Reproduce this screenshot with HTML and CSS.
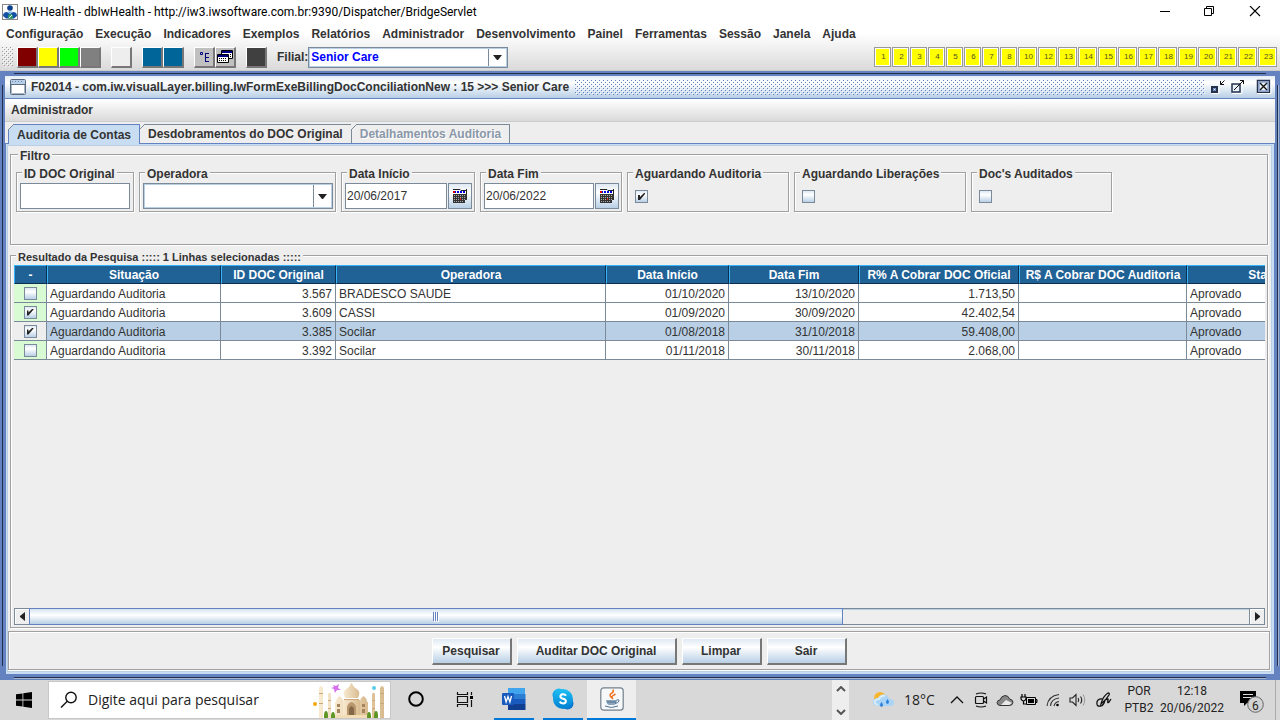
FILE: index.html
```html
<!DOCTYPE html>
<html lang="pt-BR">
<head>
<meta charset="utf-8">
<title>IW-Health</title>
<link rel="stylesheet" href="styles.css">
</head>
<body>
<header class="titlebar">
  <svg class="app-icon" width="16" height="16" viewBox="0 0 16 16"><rect x=".5" y=".5" width="15" height="15" fill="#fff" stroke="#888"/><circle cx="8" cy="4" r="2.800" fill="#0c3f8c"/><path d="M1 12q0-4 4-4l3 2 3-2q4 0 4 4l-3 2.500H4z" fill="#1552a5"/><path d="M5.500 7.500h5L8 10.500z" fill="#69aee8"/><circle cx="8.500" cy="12.500" r="2.500" fill="#2c9a62"/><path d="M7 14l3-3" stroke="#fff"/></svg>
  <span class="app-title">IW-Health - dbIwHealth - http://iw3.iwsoftware.com.br:9390/Dispatcher/BridgeServlet</span>
  <div class="win-buttons">
    <button aria-label="Minimizar"><svg width="12" height="12" viewBox="0 0 12 12"><path d="M1 5.500h10" stroke="#000"/></svg></button>
    <button aria-label="Restaurar"><svg width="12" height="12" viewBox="0 0 12 12"><path d="M.5 2.500h7v7h-7zM2.500 2.500V.5h7v7h-2" fill="none" stroke="#000"/></svg></button>
    <button aria-label="Fechar"><svg width="12" height="12" viewBox="0 0 12 12"><path d="M1 0l10 10M11 0L1 10" stroke="#000" stroke-width="1.100"/></svg></button>
  </div>
</header>
<div class="chrome">
  <nav class="menubar">
    <button>Configuração</button><button>Execução</button><button>Indicadores</button><button>Exemplos</button><button>Relatórios</button><button>Administrador</button><button>Desenvolvimento</button><button>Painel</button><button>Ferramentas</button><button>Sessão</button><button>Janela</button><button>Ajuda</button>
  </nav>
  <div class="toolbar">
    <svg class="grip" width="11" height="20"><defs><pattern id="gp" width="4" height="4" patternUnits="userSpaceOnUse"><path d="M0 0h1v1H0zM2 2h1v1H2z" fill="#999"/><path d="M1 1h1v1H1zM3 3h1v1H3z" fill="#fff"/></pattern></defs><rect width="11" height="20" fill="url(#gp)"/></svg>
    <div class="tool-group"><button class="tool maroon" aria-label="Vinho"></button><button class="tool yellow" aria-label="Amarelo"></button><button class="tool green" aria-label="Verde"></button><button class="tool gray" aria-label="Cinza"></button></div>
    <div class="tool-group"><button class="tool plain" aria-label="Claro"></button></div>
    <div class="tool-group"><button class="tool blue" aria-label="Azul 1"></button><button class="tool blue" aria-label="Azul 2"></button></div>
    <div class="tool-group">
      <button class="tool silver" aria-label="Árvore"><svg width="16" height="16" viewBox="0 0 16 16"><path d="M4.500 3.500h2v2h-2zM9.500 4v9M9 4.500h4M9 8.500h4M9 12.500h4" fill="none" stroke="#000080"/></svg></button>
      <button class="tool silver" aria-label="Janelas"><svg width="16" height="15" viewBox="0 0 16 15"><path d="M4.500 1.500h11v8h-11z" fill="#fff" stroke="#000"/><path d="M5 2h10v2H5z" fill="#000080"/><path d="M.5 5.500h11v8H.5z" fill="#fff" stroke="#000"/><path d="M1 6h10v2H1z" fill="#000080"/><path d="M2 9.500h8M2 11.500h8M13 5.500h2M13 7.500h2" stroke="#000" stroke-dasharray="1 1"/></svg></button>
    </div>
    <div class="tool-group"><button class="tool dark" aria-label="Escuro"></button></div>
    <label class="filial-label" for="filial">Filial:</label>
    <span class="combo filial"><select id="filial"><option>Senior Care</option></select><svg width="9" height="5" viewBox="0 0 9 5"><path d="M0 0h9L5 5H4z" fill="#222"/></svg></span>
    <div class="numbers">
      <button>1</button><button>2</button><button>3</button><button>4</button><button>5</button><button>6</button><button>7</button><button>8</button><button class="wide">10</button><button class="wide">12</button><button class="wide">13</button><button class="wide">14</button><button class="wide">15</button><button class="wide">16</button><button class="wide">17</button><button class="wide">18</button><button class="wide">19</button><button class="wide">20</button><button class="wide">21</button><button class="wide">22</button><button class="wide">23</button>
    </div>
  </div>
</div>

<main class="frame">
  <div class="window">
    <div class="window-title">
      <svg width="16" height="16" viewBox="0 0 16 16"><rect x=".5" y=".5" width="15" height="15" rx="1" fill="#fff" stroke="#5c6c80"/><path d="M1 1h14v4H1z" fill="#b8cfe5"/><path d="M1 5.500h14" stroke="#5c6c80"/><path d="M2 2.500h12" stroke="#6382bf" stroke-dasharray="1 2"/><path d="M1.500 6v8.500M1.500 14.500h13M14.500 6v8" fill="none" stroke="#a9b6c4"/></svg>
      <h1>F02014 - com.iw.visualLayer.billing.IwFormExeBillingDocConciliationNew : 15 &gt;&gt;&gt; Senior Care</h1>
      <svg class="bumps" height="15"><defs><pattern id="bp" width="4" height="4" patternUnits="userSpaceOnUse"><path d="M0 0h1v1H0zM2 2h1v1H2z" fill="#6382bf"/><path d="M1 1h1v1H1zM3 3h1v1H3z" fill="#fff"/></pattern></defs><rect width="100%" height="15" fill="url(#bp)"/></svg>
      <div class="window-buttons">
        <button aria-label="Minimizar janela"><svg width="16" height="16" viewBox="0 0 16 16"><path d="M2 14.500h7V8" fill="none" stroke="#fff"/><path d="M2 8h5v5H2z" fill="#fff" stroke="#26334d" stroke-width="2"/><path d="M3.500 9.500h2v2h-2z" fill="none" stroke="#6382bf"/><path d="M14.500 1.500l-4 4M10.500 2v3.500H14" fill="none" stroke="#111"/></svg></button>
        <button aria-label="Maximizar janela"><svg width="16" height="16" viewBox="0 0 16 16"><path d="M2 14.500h10V5" fill="none" stroke="#fff"/><path d="M2 5h8v8H2z" fill="#e8f0f8" stroke="#26334d" stroke-width="1.500"/><path d="M4 11l9.500-9.500M10 1.500h3.500V5" fill="none" stroke="#111"/></svg></button>
        <button aria-label="Fechar janela"><svg width="16" height="16" viewBox="0 0 16 16"><path d="M1.500 1.500h12v12h-12z" fill="#e8f0f8" stroke="#26334d" stroke-width="1.500"/><path d="M3 3h9v9H3z" fill="none" stroke="#6382bf"/><path d="M4 4l7 7M11 4l-7 7" stroke="#111" stroke-width="1.400"/><path d="M1 14.500h14V1" fill="none" stroke="#fff"/></svg></button>
      </div>
    </div>
    <nav class="window-menu"><button>Administrador</button></nav>
    <div class="tabs" role="tablist">
      <button role="tab" class="tab selected" aria-selected="true">Auditoria de Contas</button>
      <button role="tab" class="tab">Desdobramentos do DOC Original</button>
      <button role="tab" class="tab" disabled>Detalhamentos Auditoria</button>
    </div>
    <section class="pane">
      <fieldset class="etched filter">
        <legend>Filtro</legend>
        <fieldset class="etched field f-id"><legend><label for="iddoc">ID DOC Original</label></legend><input class="text" id="iddoc" type="text"></fieldset>
        <fieldset class="etched field f-op"><legend><label for="oper">Operadora</label></legend><span class="combo"><select id="oper"><option></option></select><svg width="9" height="5" viewBox="0 0 9 5"><path d="M0 0h9L5 5H4z" fill="#222"/></svg></span></fieldset>
        <fieldset class="etched field f-ini"><legend><label for="dini">Data Início</label></legend><input class="text" id="dini" type="text" value="20/06/2017"><button class="cal" aria-label="Escolher data início"><svg width="14" height="15" viewBox="0 0 14 15"><path d="M0 5h14v6h-2v3H0z" fill="#333"/><path d="M0 1h13v4H0z" fill="#fff"/><path d="M1 3h12" stroke="#0000e0" stroke-width="2" stroke-dasharray="2 1"/><path d="M0 3h2" stroke="#d00" stroke-width="2"/><path d="M0 .5h7l1 1h5" fill="none" stroke="#222"/><path d="M13.500 0v5" stroke="#222"/><path d="M1 6.500h12M1 8.500h12M1 10.500h12M1 12.500h10" stroke="#aaa" stroke-dasharray="1 1"/><path d="M7 9h1v2H7z" fill="#d22"/></svg></button></fieldset>
        <fieldset class="etched field f-fim"><legend><label for="dfim">Data Fim</label></legend><input class="text" id="dfim" type="text" value="20/06/2022"><button class="cal" aria-label="Escolher data fim"><svg width="14" height="15" viewBox="0 0 14 15"><path d="M0 5h14v6h-2v3H0z" fill="#333"/><path d="M0 1h13v4H0z" fill="#fff"/><path d="M1 3h12" stroke="#0000e0" stroke-width="2" stroke-dasharray="2 1"/><path d="M0 3h2" stroke="#d00" stroke-width="2"/><path d="M0 .5h7l1 1h5" fill="none" stroke="#222"/><path d="M13.500 0v5" stroke="#222"/><path d="M1 6.500h12M1 8.500h12M1 10.500h12M1 12.500h10" stroke="#aaa" stroke-dasharray="1 1"/><path d="M7 9h1v2H7z" fill="#d22"/></svg></button></fieldset>
        <fieldset class="etched field f-aud"><legend><label for="caud">Aguardando Auditoria</label></legend><input class="check" id="caud" type="checkbox" checked></fieldset>
        <fieldset class="etched field f-lib"><legend><label for="clib">Aguardando Liberações</label></legend><input class="check" id="clib" type="checkbox"></fieldset>
        <fieldset class="etched field f-doc"><legend><label for="cdoc">Doc's Auditados</label></legend><input class="check" id="cdoc" type="checkbox"></fieldset>
      </fieldset>

      <fieldset class="etched results">
        <legend>Resultado da Pesquisa ::::: 1 Linhas selecionadas :::::</legend>
        <div class="viewport">
          <table class="grid">
            <colgroup><col class="c-sel"><col class="c-sit"><col class="c-id"><col class="c-op"><col class="c-ini"><col class="c-fim"><col class="c-ofi"><col class="c-aud"><col class="c-sta"></colgroup>
            <thead><tr><th>-</th><th>Situação</th><th>ID DOC Original</th><th>Operadora</th><th>Data Início</th><th>Data Fim</th><th>R% A Cobrar DOC Oficial</th><th>R$ A Cobrar DOC Auditoria</th><th>Status</th></tr></thead>
            <tbody>
              <tr><td class="sel"><input class="check" type="checkbox" aria-label="Selecionar 3.567"></td><td>Aguardando Auditoria</td><td class="num">3.567</td><td>BRADESCO SAUDE</td><td class="num">01/10/2020</td><td class="num">13/10/2020</td><td class="num">1.713,50</td><td></td><td>Aprovado</td></tr>
              <tr><td class="sel"><input class="check" type="checkbox" aria-label="Selecionar 3.609" checked></td><td>Aguardando Auditoria</td><td class="num">3.609</td><td>CASSI</td><td class="num">01/09/2020</td><td class="num">30/09/2020</td><td class="num">42.402,54</td><td></td><td>Aprovado</td></tr>
              <tr class="active"><td class="sel"><input class="check" type="checkbox" aria-label="Selecionar 3.385" checked></td><td>Aguardando Auditoria</td><td class="num">3.385</td><td>Socilar</td><td class="num">01/08/2018</td><td class="num">31/10/2018</td><td class="num">59.408,00</td><td></td><td>Aprovado</td></tr>
              <tr><td class="sel"><input class="check" type="checkbox" aria-label="Selecionar 3.392"></td><td>Aguardando Auditoria</td><td class="num">3.392</td><td>Socilar</td><td class="num">01/11/2018</td><td class="num">30/11/2018</td><td class="num">2.068,00</td><td></td><td>Aprovado</td></tr>
            </tbody>
          </table>
        </div>
        <div class="scrollbar">
          <button aria-label="Rolar para a esquerda"><svg width="5" height="9" viewBox="0 0 5 9"><path d="M5 0v9L0 5V4z" fill="#222"/></svg></button>
          <div class="track"><div class="thumb"><svg width="6" height="10" viewBox="0 0 6 10"><path d="M.5 0v9M2.500 0v9M4.500 0v9" stroke="#6382bf"/><path d="M1.500 1v9M3.500 1v9M5.500 1v9" stroke="#fff"/></svg></div></div>
          <button aria-label="Rolar para a direita"><svg width="5" height="9" viewBox="0 0 5 9"><path d="M0 0v9l5-4V4z" fill="#222"/></svg></button>
        </div>
      </fieldset>

      <div class="etched actions">
        <button>Pesquisar</button><button class="long">Auditar DOC Original</button><button>Limpar</button><button>Sair</button>
      </div>
    </section>
  </div>
</main>

<footer class="taskbar">
  <button class="start" aria-label="Iniciar"><svg width="16" height="16" viewBox="0 0 16 16"><path d="M0 2.300L6.500 1.400v6.100H0zM7.300 1.300L16 0v7.500H7.300zM0 8.400h6.500v6.200L0 13.700zM7.300 8.400H16V16l-8.700-1.300z"/></svg></button>
  <div class="search">
    <svg width="18" height="18" viewBox="0 0 18 18"><circle cx="11" cy="6.500" r="5.200" fill="none" stroke="#111" stroke-width="1.400"/><path d="M7.300 10.300L1 16.500" stroke="#111" stroke-width="1.400"/></svg>
    <input type="text" value="Digite aqui para pesquisar" aria-label="Pesquisar no computador">
    <svg class="taj" width="74" height="37" viewBox="0 0 74 37">
      <defs><linearGradient id="tj" x1="0" x2="1"><stop offset="0" stop-color="#f8ead0"/><stop offset="1" stop-color="#d9bb90"/></linearGradient></defs>
      <g fill="url(#tj)"><path d="M6 7q2-4 4 0v30H6zM67 7q2-4 4 0v30h-4zM15 13q1.500-3 3 0v24h-3zM59 13q1.500-3 3 0v24h-3z"/><path d="M22 21h33v16H22z"/><path d="M30 19h17v18H30z"/><path d="M32 17q-3-6 1-9 4-2 5-6h1q1 4 5 6 4 3 1 9z"/><path d="M23 21q0-4 3.500-6 3.500 2 3.500 6zM47 21q0-4 3.500-6 3.500 2 3.500 6z"/></g>
      <path d="M6 12.500h4M6 22.500h4M67 12.500h4M67 22.500h4M15 19.500h3M15 27.500h3M59 19.500h3M59 27.500h3M31 18.500h15" stroke="#c9a87c"/>
      <path d="M34 34v-8q1-4 4.500-5 3.500 1 4.500 5v8z" fill="#b7966c"/><path d="M36 34v-6q.5-2 2.500-3 2 1 2.500 3v6z" fill="#846748"/>
      <path d="M24 26v-3h3v3zM24 32v-4h3v4zM49 26v-3h3v3zM49 32v-4h3v4z" fill="#a4845c"/>
      <path d="M22 34h33v3H22z" fill="#f3ddb6"/>
      <g fill="#5d9624"><ellipse cx="13" cy="35" rx="2" ry="5"/><ellipse cx="20" cy="36" rx="2" ry="5"/><ellipse cx="56" cy="36" rx="2" ry="5"/><ellipse cx="63" cy="35" rx="2" ry="5"/></g>
      <path d="M20 4l3 1 3-2-1 4 3 2-4 0-2 3-1-4-3-1 3-1z" fill="#d870ee"/><circle cx="61" cy="7" r="2" fill="#5ccbe8"/><circle cx="2" cy="23" r="2" fill="#f6a700"/>
    </svg>
  </div>
  <div class="apps">
    <button class="app" aria-label="Cortana"><svg width="18" height="18" viewBox="0 0 18 18"><circle cx="9" cy="9" r="6.800" fill="none" stroke="#000" stroke-width="2"/></svg></button>
    <button class="app" aria-label="Visão de tarefas"><svg width="18" height="17" viewBox="0 0 18 17"><path d="M1.500 1v2.500h10V1M1.500 5.500h10v6h-10zM1.500 16v-2.500h10V16M15.500 1v3M15.500 9v7" fill="none" stroke="#111" stroke-width="1.200"/><path d="M14 5h3v3h-3z"/></svg></button>
    <button class="app open" aria-label="Word"><svg width="24" height="22" viewBox="0 0 24 22"><path d="M6 0h17v6H6z" fill="#41a5ee"/><path d="M6 6h17.500v5H6z" fill="#2b7cd3"/><path d="M6 11h17.500v5H6z" fill="#185abd"/><path d="M6 16h17.500v6H6z" fill="#103f91"/><rect y="5" width="12" height="12" rx="1" fill="#185abd"/><path d="M2.500 8l1.600 6L6 8.500 7.900 14l1.600-6" fill="none" stroke="#fff" stroke-width="1.300"/></svg></button>
    <button class="app open" aria-label="Skype"><svg width="22" height="22" viewBox="0 0 22 22"><defs><linearGradient id="sk" x2="0" y2="1"><stop stop-color="#20c0f5"/><stop offset="1" stop-color="#007fd1"/></linearGradient></defs><circle cx="7" cy="7" r="6.500" fill="url(#sk)"/><circle cx="15.500" cy="15.500" r="6" fill="#0878d1"/><circle cx="11" cy="11" r="10" fill="url(#sk)"/><path d="M14 7.700q-1-1.700-3.200-1.500-2.500.3-2.400 2.300.1 1.700 2.700 2.200 2.800.5 2.800 2.500 0 2-2.800 2.200-2.500 0-3.400-1.900" fill="none" stroke="#fff" stroke-width="2"/></svg></button>
    <button class="app open current" aria-label="Java"><svg width="24" height="24" viewBox="0 0 24 24"><rect x=".8" y=".8" width="22.400" height="22.400" rx="3" fill="#f6f8fa" stroke="#73808c" stroke-width="1.200"/><path d="M12 11q-4-3 0-5 2-1.500 1-3.500M13 12q-2-2 0-3.500L15.500 7" fill="none" stroke="#f07426" stroke-width="1.500"/><path d="M6 13h11q-.5 4.500-3 5H9q-2.500-.5-3-5z" fill="#8ba5bd"/><path d="M16.500 13q3-1 2.500 1t-4 2.500M5 19q6 3 13 0M7 15h9" fill="none" stroke="#4f7191"/></svg></button>
  </div>
  <div class="mini-scroll"><svg width="10" height="6" viewBox="0 0 10 6"><path d="M1 5l4-4 4 4" fill="none" stroke="#555" stroke-width="2"/></svg><svg width="10" height="6" viewBox="0 0 10 6"><path d="M1 1l4 4 4-4" fill="none" stroke="#555" stroke-width="2"/></svg></div>
  <div class="weather"><svg width="22" height="18" viewBox="0 0 22 18"><circle cx="7" cy="7" r="6" fill="#f8b62c"/><path d="M5 15q-5 0-5-4 .5-4 5-4 2-4 6-3.500 4 .5 5 4.500 5 0 5 3.500T17 15z" fill="#a9d4f5"/><path d="M5 14q-4-1-3-4 1-2 4-2 2-4 6-3" fill="none" stroke="#d9edfc" stroke-width="2"/><path d="M8.500 11q-3 4 0 5 3-1 0-5zM14.500 8q-3 4 0 5 3-1 0-5z" fill="#2d7fda"/></svg><span>18°C</span></div>
  <div class="tray">
    <svg width="14" height="8" viewBox="0 0 14 8"><path d="M1 7l6-6 6 6" fill="none" stroke="#111" stroke-width="1.300"/></svg>
    <svg width="14" height="16" viewBox="0 0 14 16"><path d="M2 2q5-2 10 0M2 14q5 2 10 0M2.500 4.500h6q1 0 1 1v5q0 1-1 1h-6q-1 0-1-1v-5q0-1 1-1zM9.500 7l3-2v6l-3-2" fill="none" stroke="#111" stroke-width="1.200"/></svg>
    <svg width="18" height="13" viewBox="0 0 18 13"><path d="M4 11.500q-3-.5-3-3 .5-2.500 3-2.500 1-4 5-4.500 3.500 0 4.500 3.500 3.500.5 3.500 3.500-.5 3-3.500 3z" fill="#888" stroke="#333"/><path d="M5 11l5-5 6 3-3 2z" fill="#e9e9e9"/></svg>
    <svg width="18" height="14" viewBox="0 0 18 14"><path d="M2 1v3M5 1v3M1 4h5v2q-1 2-2.500 2T1 6zM3.500 8v3h3" fill="none" stroke="#000" stroke-width="1.200"/><path d="M6.500 4.500h9v7h-9zM16 6.500h1v3h-1z" fill="none" stroke="#000"/><path d="M8 6h6v4H8z"/></svg>
    <svg width="14" height="14" viewBox="0 0 14 14"><path d="M1 13Q2 3 13 1.500M4.500 13Q5 6 13 5M8 13q1-4 5-4.500" fill="none" stroke="#333" stroke-width="1.100"/><circle cx="11.500" cy="12" r="1.300"/></svg>
    <svg width="17" height="14" viewBox="0 0 17 14"><path d="M1 5h2.500L7 1.500v11L3.500 9H1zM9 5q1.500 2 0 4M11.500 3.500q2.500 3.500 0 7" fill="none" stroke="#222" stroke-width="1.100"/><path d="M14 1.500q3.500 5.500 0 11" fill="none" stroke="#999"/></svg>
    <svg class="pen" width="18" height="18" viewBox="0 0 18 18"><path d="M6 13Q8 5 13 2q2 0 1 2-3 5-8 9zM8 8Q3 7 2 11q-1 5 4 4 3-1 4-6 4-2 3 0-1 4 1 2l2-3" fill="none" stroke="#111" stroke-width="1.300"/></svg>
  </div>
  <div class="lang">POR<br>PTB2</div>
  <div class="clock">12:18<br>20/06/2022</div>
  <button class="notes" aria-label="Notificações"><svg width="26" height="26" viewBox="0 0 26 26"><path d="M1 4h16v12H8l-3 3v-3H1z"/><path d="M4 7.500h10M4 10.500h10" stroke="#ddd"/><circle cx="16.500" cy="17.500" r="7.800" fill="#d2d2d2" stroke="#666"/></svg><span>6</span></button>
</footer>
</body>
</html>
```
FILE: styles.css
```css
* { box-sizing: border-box; }
body {
  margin: 0;
  min-height: 100vh;
  display: flex;
  flex-direction: column;
  overflow: hidden;
  background: #eee;
  color: #333;
  font: bold 12px/14px "Liberation Sans", Arial, sans-serif;
}
button, input, select { font: inherit; color: inherit; margin: 0; padding: 0; border: 0; background: none; border-radius: 0; }
svg { display: block; flex: none; }

/* Title bar */
.titlebar { display: flex; align-items: center; height: 24px; padding-left: 2px; background: #fff; color: #000; }
.app-title { margin-left: 5px; font: 12px/16px Roboto, "Open Sans", sans-serif; white-space: nowrap; }
.win-buttons { display: flex; margin-left: auto; padding-right: 3px; }
.win-buttons button { width: 45px; height: 20px; display: grid; place-items: center; }

/* Menu and toolbar */
.chrome { background: linear-gradient(#fff 0 20%, #dadada); border-bottom: 1px solid #ccc; }
.menubar { display: flex; gap: 12px; height: 20px; padding-left: 6px; }
.toolbar { display: flex; align-items: center; height: 26px; padding: 0 3px 0 2px; }
.grip { margin-right: 4px; }
.tool-group { display: flex; margin-right: 10px; }
.tool { width: 21px; height: 21px; display: grid; place-items: center; border: 1px solid #fff; border-right: 2px solid #777; border-bottom: 2px solid #777; }
.maroon { background: #800000; }
.yellow { background: #ff0; }
.green { background: #0f0; }
.gray { background: #808080; }
.plain { background: #eee; }
.blue { background: #006699; }
.silver { background: #c0c0c0; }
.dark { background: #404040; }
.combo { position: relative; display: block; width: 100%; height: 26px; background: #fff; border: 1px solid #7a8a99; }
.combo select { appearance: none; display: block; width: 100%; height: 100%; padding-left: 1px; border: 1px solid #b8cfe5; outline: 0; background: linear-gradient(#7a8a99, #7a8a99) right 17px top / 1px 100% no-repeat; }
.combo svg { position: absolute; right: 5px; top: 50%; margin-top: -2px; pointer-events: none; }
.filial { width: 200px; height: 21px; color: #00f; }
.numbers { display: flex; gap: 1px; margin-left: auto; }
.numbers button { width: 17px; height: 20px; padding-left: 2px; border: 1px solid #999; box-shadow: inset 0 0 0 1px #fff; background: #ff0; color: #554f20; font: 8px/16px "Liberation Sans", Arial, sans-serif; }
.numbers .wide { width: 19px; }

/* Internal frame */
.frame { position: relative; flex: 1; display: flex; padding: 5px; background: #6382bf; }
.frame::before { content: ""; position: absolute; inset: 2px 14px; border: solid #222f4a; border-width: 1px 0; box-shadow: 0 1px 0 #a3b8cc; }
.frame::after { content: ""; position: absolute; inset: 14px 2px; border: solid #222f4a; border-width: 0 1px; box-shadow: 1px 0 0 #a3b8cc; }
.window { position: relative; z-index: 1; flex: 1; min-width: 0; display: flex; flex-direction: column; background: #eee; }
.window-title { display: flex; align-items: center; height: 23px; padding: 0 3px 0 5px; border-bottom: 1px solid #6382bf; background: linear-gradient(#e4edf6, #fff 30%, #b8cfe5); }
.window-title h1 { margin: 0 6px 0 5px; font: inherit; white-space: nowrap; }
.bumps { flex: 1; min-width: 0; }
.window-buttons { display: flex; gap: 4px; margin-left: 5px; }
.window-buttons button:last-child { margin-left: 6px; }
.window-menu { height: 23px; padding: 4px 6px; border-bottom: 1px solid #ccc; background: linear-gradient(#fff, #dadada); }
.window-menu button { display: block; }

/* Tabs */
.tabs { display: flex; padding: 2px 3px 0; }
.tab { position: relative; height: 19px; padding: 0 8px; border: solid #7a8a99; border-width: 1px 1px 0 0; background: #eee; white-space: nowrap; }
.tab::before { content: ""; position: absolute; left: -1px; top: -1px; width: 6px; height: 6px; background: linear-gradient(135deg, #eee 42%, #7a8a99 42% 58%, transparent 58%); }
.tab.selected { height: 20px; margin-bottom: -1px; border: 1px solid #6382bf; border-bottom: 0; background: #c8ddf2; z-index: 1; }
.tab:disabled { color: #8a97a8; text-shadow: 1px 1px 0 #fff; }

.pane { flex: 1; display: flex; flex-direction: column; padding: 3px 2px 2px 1px; border: solid #c8ddf2; border-width: 2px 3px 3px 2px; background: #eee; outline: 1px solid #6382bf; outline-offset: -1px; box-shadow: inset 0 0 0 1px #b8cfe5; min-width: 0; }
.etched { margin: 0; padding: 0; min-width: 0; border: 1px solid #a0a0a0; box-shadow: 1px 1px 0 #fff, inset 1px 1px 0 #fff; }
.etched > legend { margin: 0 0 0 2px; padding: 3px 2px 0; line-height: 10px; background: #eee; white-space: nowrap; }

/* Filter */
.filter { display: flex; align-items: flex-start; gap: 5px; padding: 5px 5px 32px; margin: 0 2px; }
.field { display: flex; flex: none; height: 46px; padding: 4px 2px 3px 3px; }
.f-id { width: 118px; padding-right: 3px; }
.f-op { width: 197px; }
.f-ini { width: 134px; }
.f-fim { width: 142px; }
.f-aud { width: 162px; }
.f-lib { width: 172px; }
.f-doc { width: 141px; }
.text { flex: 1; width: 0; height: 26px; padding-left: 1px; border: 1px solid #7a8a99; background: #fff; font-weight: normal; outline: 0; }
.cal { display: grid; place-items: center; width: 24px; height: 26px; margin-left: 1px; border: 1px solid #7a8a99; background: linear-gradient(#dfe9f4, #fff 35%, #b8cfe5); }
.check { appearance: none; position: relative; display: block; width: 13px; height: 13px; border: 1px solid #7a8a99; background: linear-gradient(#dfe9f4, #fff 35%, #b8cfe5); }
.check:checked::before { content: ""; position: absolute; left: 2px; top: 2px; width: 7px; height: 7px; background: #222; clip-path: polygon(0 28%, 28% 28%, 28% 58%, 86% 0, 100% 0, 100% 14%, 28% 100%, 0 100%); }
.field > .check { margin: 7px 0 0 4px; }

/* Results */
.results { flex: 1; display: flex; flex-direction: column; margin: 4px 2px 3px; padding: 3px 2px 2px 3px; }
.results > legend { font-size: 11px; }
.viewport { flex: 1; overflow: hidden; }
.grid { table-layout: fixed; width: 1332px; border-collapse: separate; border-spacing: 0; font-weight: normal; }
.c-sel { width: 33px; }
.c-sit { width: 174px; }
.c-id { width: 115px; }
.c-op { width: 270px; }
.c-ini { width: 123px; }
.c-fim { width: 130px; }
.c-ofi { width: 160px; }
.c-aud { width: 168px; }
.c-sta { width: 159px; }
.grid th { height: 19px; padding: 0; border: 1px solid; border-color: #36b4fa #0d2f4f #0d2f4f #36b4fa; background: #206196; color: #fff; font-weight: bold; white-space: nowrap; }
.grid td { height: 19px; padding: 2px 3px 0; border: solid #7a8a99; border-width: 0 1px 1px 0; background: #fff; white-space: nowrap; }
.grid .num { text-align: right; }
.grid .sel { padding: 0; background: #d9fbd3; }
.sel .check { margin: 0 auto; }
.grid .active td { background: #b8cfe5; }
.grid .active .sel { background: #eee; }
.scrollbar { display: flex; height: 17px; border: 1px solid #7a8a99; border-right: 0; }
.scrollbar button { width: 15px; display: grid; place-items: center; border-right: 1px solid #7a8a99; box-shadow: inset 1px 1px 0 #fff; }
.track { flex: 1; border-right: 1px solid #7a8a99; box-shadow: inset 0 1px 0 #b8cfe5; }
.thumb { display: grid; place-items: center; width: 66.6%; height: 100%; background: linear-gradient(#d5e3f1, #fff 40%, #b8cfe5); outline: 1px solid #6382bf; }

.actions { display: flex; justify-content: center; gap: 5px; height: 39px; padding-top: 6px; }
.actions button { width: 80px; height: 27px; border: 1px solid #fff; border-right: 2px solid #777; border-bottom: 2px solid #777; background: linear-gradient(#dfe9f4, #fff 35%, #b8cfe5); }
.actions .long { width: 160px; }

/* Taskbar */
.taskbar { display: flex; height: 40px; background: #d8d8d8; color: #222; font: 12px/17px Roboto, "Open Sans", sans-serif; }
.start { display: grid; place-items: center; width: 48px; }
.search { display: flex; align-items: center; width: 343px; height: 38px; margin-top: 1px; padding: 0 3px 0 11px; border: 1px solid #c8c8c8; background: #fff; }
.search input { flex: 1; min-width: 0; margin-left: 10px; font: 14px/20px "Open Sans", "Noto Sans", sans-serif; outline: 0; }
.taj { align-self: flex-end; }
.apps { display: flex; }
.app { display: grid; place-items: center; width: 49px; border-bottom: 2px solid transparent; }
.app.open { background: linear-gradient(#0078d7, #0078d7) center bottom / 40px 2px no-repeat border-box; }
.app.current { background: #eee; border-bottom-color: #0078d7; }
.mini-scroll { display: flex; flex-direction: column; justify-content: space-between; align-items: center; width: 17px; margin-left: auto; padding: 6px 0 5px; background: #eee; }
.weather { display: flex; align-items: center; gap: 9px; width: 96px; padding-left: 24px; font: 14px/20px "Open Sans", "Noto Sans", sans-serif; white-space: nowrap; }
.tray { display: grid; grid-template-columns: repeat(6, 24px) 30px; place-items: center; }
.lang { width: 40px; padding-top: 3px; text-align: center; }
.clock { width: 66px; padding-top: 3px; text-align: center; }
.notes { position: relative; width: 51px; margin-right: 4px; padding-left: 14px; border-right: 1px solid #aaa; }
.notes span { position: absolute; left: 27px; top: 18px; }
```
